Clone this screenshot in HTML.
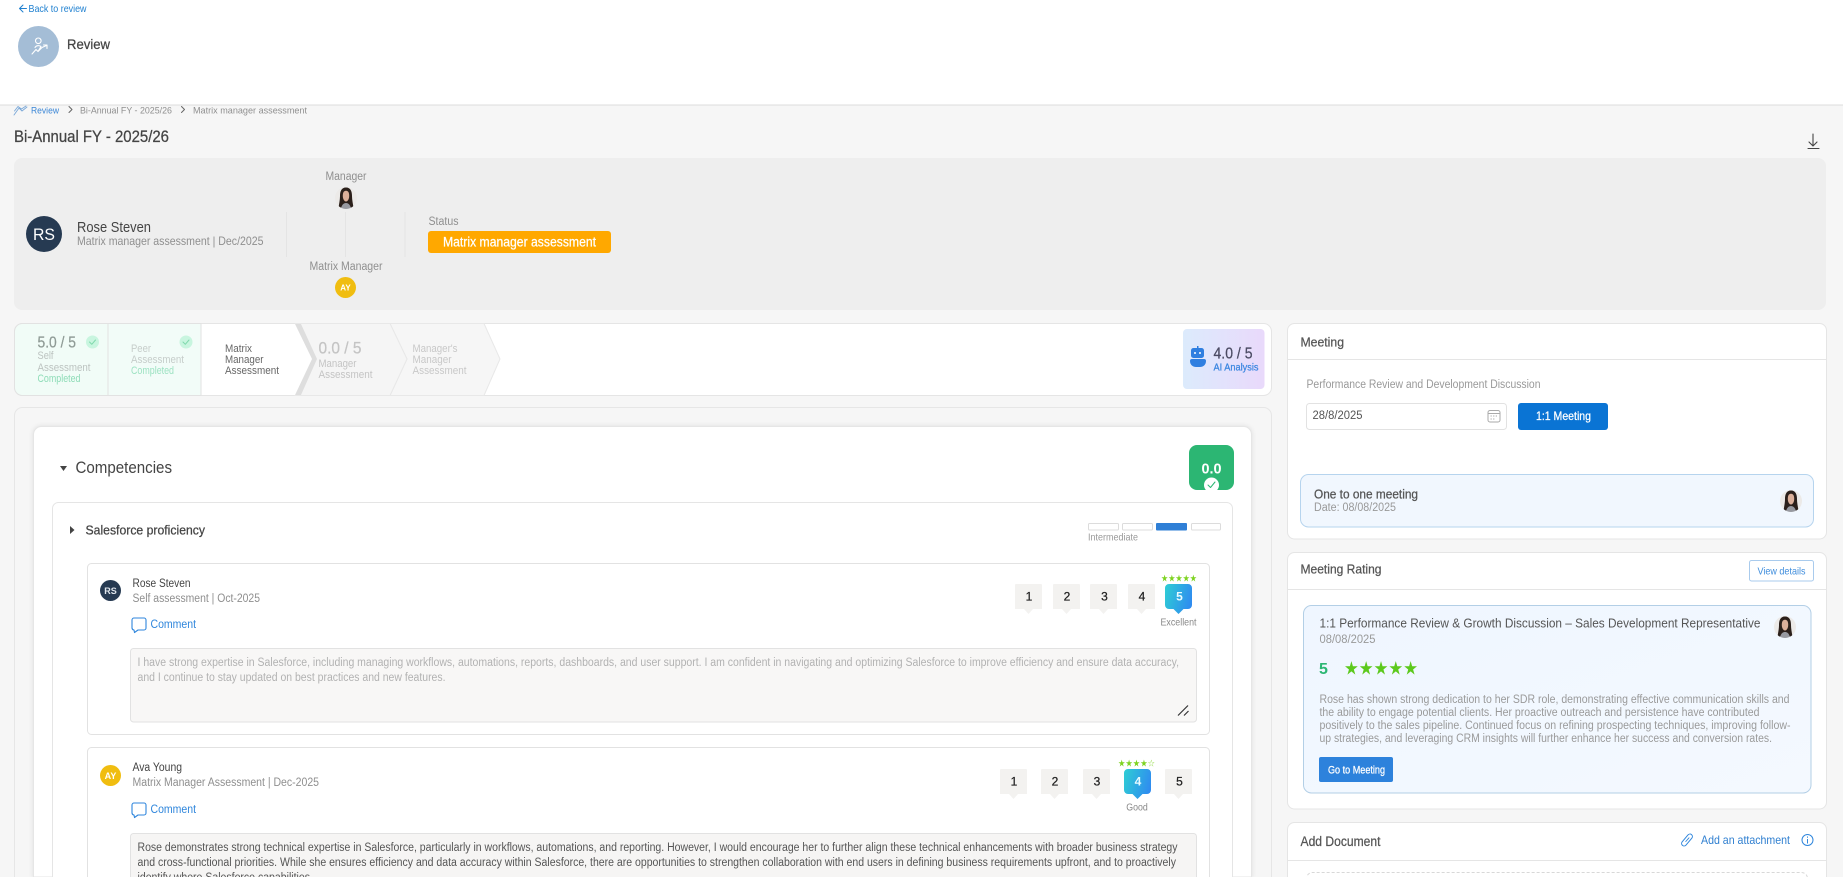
<!DOCTYPE html>
<html lang="en"><head><meta charset="utf-8"><title>Review</title>
<style>
html,body{margin:0;padding:0;width:1843px;height:877px;overflow:hidden;background:#f6f6f6}
svg{display:block}
text{font-family:"Liberation Sans",sans-serif;white-space:pre}
.m{stroke-width:.25px}
.ln{fill:none;stroke-linecap:round;stroke-linejoin:round}
</style></head><body>
<svg width="1843" height="877" viewBox="0 0 1843 877" xmlns="http://www.w3.org/2000/svg">
<defs>
<linearGradient id="ai" x1="0" y1="0" x2="1" y2="0"><stop offset="0" stop-color="#dcebfc"/><stop offset="1" stop-color="#e9d9fb"/></linearGradient>
<linearGradient id="bl" x1="0" y1="0.3" x2="1" y2="0.6"><stop offset="0" stop-color="#2ec9d6"/><stop offset="1" stop-color="#2f8bf0"/></linearGradient>
<linearGradient id="pane" x1="0" y1="0" x2="1" y2="1"><stop offset="0" stop-color="#eff6ff"/><stop offset="1" stop-color="#f4f9ff"/></linearGradient>
<clipPath id="phc"><circle cx="11" cy="11" r="11"/></clipPath>
<clipPath id="bc"><rect x="1189" y="445" width="45" height="45" rx="8"/></clipPath>
<g id="ph"><g clip-path="url(#phc)"><rect width="22" height="22" fill="#eceae8"/>
<path d="M11 .5C6.300 .5 5 4.500 5 9 5 13 4 17 3.500 21L8 20 14 20 18.500 21C18 17 17 13 17 9 17 4.500 15.700 .5 11 .5Z" fill="#2b201b"/>
<path d="M11 3.800C8.300 3.800 7.800 6.500 7.800 9 7.800 12 9.300 14.500 11 14.500 12.700 14.500 14.200 12 14.200 9 14.200 6.500 13.700 3.800 11 3.800Z" fill="#dcb09a"/>
<path d="M6 22C6.500 18 8.500 16 11 16 13.500 16 15.500 18 16 22Z" fill="#9799a0"/></g></g>
<g id="rb"><path d="M1 0H26A1 1 0 0 1 27 1V25H18L13.500 30 9 25H0V1A1 1 0 0 1 1 0Z" fill="#f3f2f0"/></g>
<g id="rbb"><path d="M4 0H23A4 4 0 0 1 27 4V21A4 4 0 0 1 23 25H18.500L13.500 30 8.500 25H4A4 4 0 0 1 0 21V4A4 4 0 0 1 4 0Z" fill="url(#bl)"/></g>
<g id="cm"><path class="ln" d="M134 0H144A2 2 0 0 1 146 2V10A2 2 0 0 1 144 12H138L134.500 14.500 134 12A2.300 2.300 0 0 1 132 10V2A2 2 0 0 1 134 0Z" stroke="#2f86dc" stroke-width="1.100"/></g>
</defs>

<!-- page -->
<rect width="1843" height="877" fill="#f6f6f6"/>
<rect x="0" y="104.500" width="1843" height="1" fill="#dcdcdc"/>
<rect width="1843" height="104.500" fill="#fff"/>

<!-- header -->
<path class="ln" d="M26.500 8.500H19.500M23 5 19.500 8.500 23 12" stroke="#1f80d0" stroke-width="1"/>
<text x="28.500" y="12" font-size="10.500" fill="#1f80d0" textLength="58" lengthAdjust="spacingAndGlyphs">Back to review</text>
<circle cx="38.500" cy="46.500" r="20.500" fill="#a4bdd6"/>
<circle cx="38.300" cy="40.800" r="2.800" fill="none" stroke="#fff" stroke-width="1.100"/>
<path class="ln" d="M32 54 36 49.500 38 51.500 42 47.500 46.500 45.500M43.500 45H47V48.500M35 47.500C36 45.500 39 45 41 46.500L38 51.500" stroke="#fff" stroke-width="1.100"/>
<text x="67" y="49" font-size="14" fill="#444" stroke="#444" class="m" textLength="43" lengthAdjust="spacingAndGlyphs">Review</text>

<!-- breadcrumb -->
<path class="ln" d="M14 115 19 108 22 111 27 107M14.500 111 18 106.500 21.500 109 26 106" stroke="#7aa8d8" stroke-width=".9"/>
<text x="31" y="113.500" font-size="9.500" fill="#3a86d6" textLength="28" lengthAdjust="spacingAndGlyphs">Review</text>
<path class="ln" d="M69 106.500 72 109.500 69 112.500" stroke="#666" stroke-width="1"/>
<text x="80" y="113.500" font-size="9.500" fill="#8f8f8f" textLength="92" lengthAdjust="spacingAndGlyphs">Bi-Annual FY - 2025/26</text>
<path class="ln" d="M181.500 106.500 184.500 109.500 181.500 112.500" stroke="#666" stroke-width="1"/>
<text x="193" y="113.500" font-size="9.500" fill="#8f8f8f" textLength="114" lengthAdjust="spacingAndGlyphs">Matrix manager assessment</text>
<text x="14" y="142" font-size="16.500" fill="#444" stroke="#444" class="m" textLength="155" lengthAdjust="spacingAndGlyphs">Bi-Annual FY - 2025/26</text>
<path class="ln" d="M1813 134V146M1809 142 1813 146 1817 142M1808 148.500H1819" stroke="#444" stroke-width="1.100"/>

<!-- profile band -->
<rect x="14" y="158" width="1812" height="152" rx="8" fill="#eeeeee"/>
<circle cx="44" cy="234" r="18" fill="#263a52"/>
<text x="44" y="240" font-size="17" fill="#fff" text-anchor="middle" textLength="22" lengthAdjust="spacingAndGlyphs">RS</text>
<text x="77" y="232" font-size="15" fill="#444" textLength="74" lengthAdjust="spacingAndGlyphs">Rose Steven</text>
<text x="77" y="245" font-size="12" fill="#8f8f8f" textLength="186.500" lengthAdjust="spacingAndGlyphs">Matrix manager assessment | Dec/2025</text>
<path d="M286.500 212V257M345.500 212V257M405 212V257" stroke="#e4e4e4" stroke-width="1"/>
<text x="346" y="180" font-size="11.500" fill="#8f8f8f" text-anchor="middle" textLength="41" lengthAdjust="spacingAndGlyphs">Manager</text>
<use href="#ph" transform="translate(335 187)"/>
<text x="346" y="270" font-size="11.500" fill="#8f8f8f" text-anchor="middle" textLength="73" lengthAdjust="spacingAndGlyphs">Matrix Manager</text>
<circle cx="345.500" cy="287.500" r="10.500" fill="#f0bd10"/>
<text x="345.500" y="290.500" font-size="8" font-weight="bold" fill="#fff" text-anchor="middle">AY</text>
<text x="428.500" y="225" font-size="11.500" fill="#8f8f8f" textLength="30" lengthAdjust="spacingAndGlyphs">Status</text>
<rect x="428" y="231" width="183" height="22" rx="3" fill="#ffa800"/>
<text x="443" y="246.500" font-size="13.500" fill="#fff" stroke="#fff" class="m" textLength="153" lengthAdjust="spacingAndGlyphs">Matrix manager assessment</text>

<!-- stepper -->
<rect x="14.500" y="323.500" width="1257" height="72" rx="8" fill="#fff" stroke="#e5e5e5"/>
<path d="M390 323.500H484L500 359 484 395.500H390L407 359Z" fill="#f6f6f6" stroke="#e8e8e8"/>
<path d="M295 323.500H390L407 359 390 395.500H295L312 359Z" fill="#f5f5f5" stroke="#e8e8e8"/>
<path d="M22 323.500H108V395.500H22A8 8 0 0 1 14.500 387.500V331.500A8 8 0 0 1 22 323.500Z" fill="#f1fcf7" stroke="#e2e2e2"/>
<rect x="108" y="323.500" width="93" height="72" fill="#f2fcf8" stroke="#e2e2e2"/>
<path d="M295 324H301L317 359 301 395H295L312 359Z" fill="#dedede"/>
<path d="M201.500 324H295L312 359 295 395H201.500Z" fill="#fff"/>
<text x="37.500" y="347.500" font-size="15.500" fill="#8f9b96" stroke="#8f9b96" class="m" textLength="38.500" lengthAdjust="spacingAndGlyphs">5.0 / 5</text>
<circle cx="92.500" cy="342" r="6.500" fill="#c8f5df"/><path class="ln" d="M89.500 342 91.800 344.300 95.500 340" stroke="#7fd9ac"/>
<text x="37.500" y="359" font-size="11" fill="#bcc3c0" textLength="16" lengthAdjust="spacingAndGlyphs">Self</text>
<text x="37.500" y="371" font-size="11" fill="#bcc3c0" textLength="53" lengthAdjust="spacingAndGlyphs">Assessment</text>
<text x="37.500" y="382" font-size="11" fill="#8edcb7" textLength="43" lengthAdjust="spacingAndGlyphs">Completed</text>
<circle cx="186" cy="342" r="6.500" fill="#c8f5df"/><path class="ln" d="M183 342 185.300 344.300 189 340" stroke="#7fd9ac"/>
<text x="131" y="352" font-size="11" fill="#c6cdca" textLength="20" lengthAdjust="spacingAndGlyphs">Peer</text>
<text x="131" y="363" font-size="11" fill="#c6cdca" textLength="53" lengthAdjust="spacingAndGlyphs">Assessment</text>
<text x="131" y="374" font-size="11" fill="#9de2c2" textLength="43" lengthAdjust="spacingAndGlyphs">Completed</text>
<text x="225" y="352" font-size="11" fill="#666" textLength="27" lengthAdjust="spacingAndGlyphs">Matrix</text>
<text x="225" y="363" font-size="11" fill="#666" textLength="38.500" lengthAdjust="spacingAndGlyphs">Manager</text>
<text x="225" y="374" font-size="11" fill="#666" textLength="54" lengthAdjust="spacingAndGlyphs">Assessment</text>
<text x="318.500" y="353.500" font-size="16.500" fill="#c4c4c4" stroke="#c4c4c4" class="m" textLength="43" lengthAdjust="spacingAndGlyphs">0.0 / 5</text>
<text x="318.500" y="367" font-size="11" fill="#c4c4c4" textLength="38" lengthAdjust="spacingAndGlyphs">Manager</text>
<text x="318.500" y="378" font-size="11" fill="#c4c4c4" textLength="54" lengthAdjust="spacingAndGlyphs">Assessment</text>
<text x="412.500" y="352" font-size="11" fill="#c8c8c8" textLength="45" lengthAdjust="spacingAndGlyphs">Manager's</text>
<text x="412.500" y="363" font-size="11" fill="#c8c8c8" textLength="39" lengthAdjust="spacingAndGlyphs">Manager</text>
<text x="412.500" y="374" font-size="11" fill="#c8c8c8" textLength="54" lengthAdjust="spacingAndGlyphs">Assessment</text>
<!-- AI -->
<rect x="1183" y="329" width="81.500" height="60" rx="4" fill="url(#ai)"/>
<rect x="1191" y="348" width="13" height="10" rx="2.500" fill="#2f7fe0"/>
<rect x="1197" y="346" width="1.500" height="3" fill="#2f7fe0"/>
<circle cx="1195" cy="353" r="1" fill="#fff"/><circle cx="1200" cy="353" r="1" fill="#fff"/>
<path d="M1192 359H1204A2 2 0 0 1 1206 361C1206 365 1203 367 1200 367H1196C1193 367 1190 365 1190 361A2 2 0 0 1 1192 359Z" fill="#2f7fe0"/>
<text x="1213.500" y="358.500" font-size="15.500" fill="#4b4b63" stroke="#4b4b63" class="m" textLength="39" lengthAdjust="spacingAndGlyphs">4.0 / 5</text>
<text x="1213.500" y="370.500" font-size="10.500" fill="#3a86e0" stroke="#3a86e0" class="m" textLength="45" lengthAdjust="spacingAndGlyphs">AI Analysis</text>

<!-- left panel -->
<path d="M14.500 877V415.500A8 8 0 0 1 22.500 407.500H1263.500A8 8 0 0 1 1271.500 415.500V877" fill="#f6f6f6" stroke="#e6e6e6"/>
<path d="M33.500 877V434.500A8 8 0 0 1 41.500 426.500H1243.500A8 8 0 0 1 1251.500 434.500V877Z" fill="#fff" stroke="#e6e6e6" style="filter:drop-shadow(0 0 2px #ddd)"/>
<path d="M60 466H67L63.500 471Z" fill="#444"/>
<text x="75.500" y="473" font-size="16.500" fill="#444" textLength="96.500" lengthAdjust="spacingAndGlyphs">Competencies</text>
<rect x="1189" y="445" width="45" height="45" rx="8" fill="#2cb673"/>
<text x="1201.500" y="473.500" font-size="14.500" font-weight="bold" fill="#fff" textLength="20" lengthAdjust="spacingAndGlyphs">0.0</text>
<g clip-path="url(#bc)"><circle cx="1211.500" cy="485" r="7.500" fill="#fff"/><path class="ln" d="M1208 485 1210.500 487.500 1215 482" stroke="#2cb673"/></g>

<!-- competency card -->
<path d="M52.500 877V508.500A6 6 0 0 1 58.500 502.500H1226.500A6 6 0 0 1 1232.500 508.500V877" fill="#fff" stroke="#e5e5e5"/>
<path d="M70 526 74.500 530 70 534Z" fill="#444"/>
<text x="85.500" y="534.500" font-size="13" fill="#444" stroke="#444" class="m" textLength="119.500" lengthAdjust="spacingAndGlyphs">Salesforce proficiency</text>
<rect x="1088.500" y="523.500" width="30" height="6.500" rx="1" fill="#fff" stroke="#dcdcdc"/>
<rect x="1122.500" y="523.500" width="30" height="6.500" rx="1" fill="#fff" stroke="#dcdcdc"/>
<rect x="1156" y="523" width="31" height="7.500" rx="1" fill="#2f7fd6"/>
<rect x="1191.500" y="523.500" width="29" height="6.500" rx="1" fill="#fff" stroke="#dcdcdc"/>
<text x="1088" y="540.500" font-size="10.500" fill="#999" textLength="50" lengthAdjust="spacingAndGlyphs">Intermediate</text>

<!-- rose review -->
<rect x="87.500" y="563.500" width="1122" height="171" rx="4" fill="#fff" stroke="#e2e2e2"/>
<circle cx="110.500" cy="590.500" r="10.500" fill="#263a52"/>
<text x="110.500" y="594" font-size="9" font-weight="bold" fill="#dfe5ec" text-anchor="middle">RS</text>
<text x="132.500" y="587" font-size="11.500" fill="#444" textLength="58" lengthAdjust="spacingAndGlyphs">Rose Steven</text>
<text x="132.500" y="602" font-size="11.500" fill="#8f8f8f" textLength="127.500" lengthAdjust="spacingAndGlyphs">Self assessment | Oct-2025</text>
<use href="#cm" transform="translate(0 618)"/>
<text x="150.500" y="628" font-size="11.500" fill="#2f86dc" textLength="45.500" lengthAdjust="spacingAndGlyphs">Comment</text>
<rect x="130.500" y="648.500" width="1066" height="73.500" rx="3" fill="#f8f7f6" stroke="#e2e2e2"/>
<text x="137.500" y="666" font-size="11.500" fill="#b2b2b2" textLength="1041.500" lengthAdjust="spacingAndGlyphs">I have strong expertise in Salesforce, including managing workflows, automations, reports, dashboards, and user support. I am confident in navigating and optimizing Salesforce to improve efficiency and ensure data accuracy,</text>
<text x="137.500" y="681" font-size="11.500" fill="#b2b2b2" textLength="308" lengthAdjust="spacingAndGlyphs">and I continue to stay updated on best practices and new features.</text>
<path d="M1178 715.500 1188 705.500M1184 715.500 1188.500 711" stroke="#333" stroke-width="1.200" fill="none"/>
<use href="#rb" x="1015" y="584"/><use href="#rb" x="1053" y="584"/><use href="#rb" x="1090" y="584"/><use href="#rb" x="1128" y="584"/><use href="#rbb" x="1165" y="584"/>
<g font-size="12" text-anchor="middle" fill="#222" stroke="#222" class="m"><text x="1029" y="600.500">1</text><text x="1067" y="600.500">2</text><text x="1104.500" y="600.500">3</text><text x="1142" y="600.500">4</text></g>
<text x="1179.500" y="600.500" font-size="12" font-weight="bold" text-anchor="middle" fill="#e8fbff">5</text>
<text x="1161" y="581.500" font-size="9.500" fill="#7ed321" textLength="36" lengthAdjust="spacingAndGlyphs" style="font-family:'DejaVu Sans',sans-serif">★★★★★</text>
<text x="1178.500" y="625.500" font-size="10.500" fill="#888" text-anchor="middle" textLength="36" lengthAdjust="spacingAndGlyphs">Excellent</text>

<!-- ava review -->
<path d="M87.500 877V751.500A4 4 0 0 1 91.500 747.500H1205.500A4 4 0 0 1 1209.500 751.500V877" fill="#fff" stroke="#e2e2e2"/>
<circle cx="110.500" cy="775.500" r="10.500" fill="#f0bd10"/>
<text x="110.500" y="779" font-size="9" font-weight="bold" fill="#fff" text-anchor="middle">AY</text>
<text x="132.500" y="771" font-size="11.500" fill="#444" textLength="49.500" lengthAdjust="spacingAndGlyphs">Ava Young</text>
<text x="132.500" y="786" font-size="11.500" fill="#8f8f8f" textLength="186.500" lengthAdjust="spacingAndGlyphs">Matrix Manager Assessment | Dec-2025</text>
<use href="#cm" transform="translate(0 803)"/>
<text x="150.500" y="813" font-size="11.500" fill="#2f86dc" textLength="45.500" lengthAdjust="spacingAndGlyphs">Comment</text>
<path d="M130.500 877V836.500A3 3 0 0 1 133.500 833.500H1193.500A3 3 0 0 1 1196.500 836.500V877" fill="#f6f5f4" stroke="#e2e2e2"/>
<text x="137.500" y="851" font-size="11.500" fill="#555" textLength="1040" lengthAdjust="spacingAndGlyphs">Rose demonstrates strong technical expertise in Salesforce, particularly in workflows, automations, and reporting. However, I would encourage her to further align these technical enhancements with broader business strategy</text>
<text x="137.500" y="866" font-size="11.500" fill="#555" textLength="1038.500" lengthAdjust="spacingAndGlyphs">and cross-functional priorities. While she ensures efficiency and data accuracy within Salesforce, there are opportunities to strengthen collaboration with end users in defining business requirements upfront, and to proactively</text>
<text x="137.500" y="881" font-size="11.500" fill="#555" textLength="172.500" lengthAdjust="spacingAndGlyphs">identify where Salesforce capabilities</text>
<use href="#rb" x="1000" y="769"/><use href="#rb" x="1041" y="769"/><use href="#rb" x="1083" y="769"/><use href="#rbb" x="1124" y="769"/><use href="#rb" x="1165" y="769"/>
<g font-size="12" text-anchor="middle" fill="#222" stroke="#222" class="m"><text x="1014" y="785.500">1</text><text x="1055" y="785.500">2</text><text x="1097" y="785.500">3</text><text x="1179.500" y="785.500">5</text></g>
<text x="1138" y="785.500" font-size="12" font-weight="bold" text-anchor="middle" fill="#e8fbff">4</text>
<text x="1118" y="766.500" font-size="9.500" fill="#7ed321" textLength="37" lengthAdjust="spacingAndGlyphs" style="font-family:'DejaVu Sans',sans-serif">★★★★☆</text>
<text x="1137" y="810.500" font-size="10.500" fill="#888" text-anchor="middle" textLength="21.500" lengthAdjust="spacingAndGlyphs">Good</text>

<!-- Meeting card -->
<rect x="1287.500" y="323.500" width="539" height="215.500" rx="7" fill="#fff" stroke="#e5e5e5"/>
<rect x="1288" y="359" width="538" height="1" fill="#e5e5e5"/>
<text x="1300.500" y="346.500" font-size="13" fill="#555" stroke="#555" class="m" textLength="43.500" lengthAdjust="spacingAndGlyphs">Meeting</text>
<text x="1306.500" y="388" font-size="11.500" fill="#999" textLength="234" lengthAdjust="spacingAndGlyphs">Performance Review and Development Discussion</text>
<rect x="1306.500" y="403.500" width="200" height="26" rx="3" fill="#fff" stroke="#e2e2e2"/>
<text x="1312.500" y="419" font-size="11.500" fill="#555" textLength="50" lengthAdjust="spacingAndGlyphs">28/8/2025</text>
<rect x="1488" y="410.500" width="12" height="11.500" rx="2" fill="none" stroke="#aaa"/>
<path d="M1488 413.500H1500" stroke="#aaa"/><path d="M1490.500 416H1498M1490.500 419H1495.500" stroke="#aaa" stroke-dasharray="1.300 1.300"/>
<rect x="1518" y="403" width="90" height="27" rx="3" fill="#0a74d4"/>
<text x="1536" y="420" font-size="12" fill="#fff" stroke="#fff" class="m" textLength="55" lengthAdjust="spacingAndGlyphs">1:1 Meeting</text>
<rect x="1300.500" y="474.500" width="513" height="52.500" rx="8" fill="#f1f7fe" stroke="#b6d4ee"/>
<text x="1314" y="498.500" font-size="13" fill="#555" stroke="#555" class="m" textLength="104" lengthAdjust="spacingAndGlyphs">One to one meeting</text>
<text x="1314" y="511" font-size="11.500" fill="#999" textLength="82" lengthAdjust="spacingAndGlyphs">Date: 08/08/2025</text>
<use href="#ph" transform="translate(1780 490)"/>

<!-- Meeting rating -->
<rect x="1287.500" y="552.500" width="539" height="256.500" rx="7" fill="#fff" stroke="#e5e5e5"/>
<rect x="1288" y="589" width="538" height="1" fill="#e5e5e5"/>
<text x="1300.500" y="573.500" font-size="13" fill="#555" stroke="#555" class="m" textLength="81" lengthAdjust="spacingAndGlyphs">Meeting Rating</text>
<rect x="1749.500" y="560.500" width="64" height="20.500" rx="2" fill="#fff" stroke="#a9cbed"/>
<text x="1757.500" y="574.500" font-size="10.500" fill="#3f8ddc" textLength="48" lengthAdjust="spacingAndGlyphs">View details</text>
<rect x="1303.500" y="605.500" width="507.500" height="187.500" rx="8" fill="url(#pane)" stroke="#b3cfe6"/>
<text x="1319.500" y="627.500" font-size="13" fill="#555" textLength="441" lengthAdjust="spacingAndGlyphs">1:1 Performance Review &amp; Growth Discussion – Sales Development Representative</text>
<text x="1319.500" y="643" font-size="11.500" fill="#999" textLength="56" lengthAdjust="spacingAndGlyphs">08/08/2025</text>
<use href="#ph" transform="translate(1774 616)"/>
<text x="1319" y="674" font-size="16" font-weight="bold" fill="#2cb673">5</text>
<text x="1344" y="674.500" font-size="18.500" fill="#5cc91c" textLength="74" lengthAdjust="spacingAndGlyphs" style="font-family:'DejaVu Sans',sans-serif">★★★★★</text>
<g font-size="11.500" fill="#9a9a9a">
<text x="1319.500" y="703" textLength="470" lengthAdjust="spacingAndGlyphs">Rose has shown strong dedication to her SDR role, demonstrating effective communication skills and</text>
<text x="1319.500" y="716" textLength="440" lengthAdjust="spacingAndGlyphs">the ability to engage potential clients. Her proactive outreach and persistence have contributed</text>
<text x="1319.500" y="729" textLength="471" lengthAdjust="spacingAndGlyphs">positively to the sales pipeline. Continued focus on refining prospecting techniques, improving follow-</text>
<text x="1319.500" y="742" textLength="452.500" lengthAdjust="spacingAndGlyphs">up strategies, and leveraging CRM insights will further enhance her success and conversion rates.</text>
</g>
<rect x="1319" y="757" width="74" height="25" rx="2" fill="#2d82dc"/>
<text x="1328" y="773.500" font-size="11" fill="#fff" stroke="#fff" class="m" textLength="57" lengthAdjust="spacingAndGlyphs">Go to Meeting</text>

<!-- Add document -->
<path d="M1287.500 877V829.500A7 7 0 0 1 1294.500 822.500H1819.500A7 7 0 0 1 1826.500 829.500V877" fill="#fff" stroke="#e5e5e5"/>
<rect x="1288" y="860" width="538" height="1" fill="#e5e5e5"/>
<text x="1300.500" y="846" font-size="13.500" fill="#555" stroke="#555" class="m" textLength="80" lengthAdjust="spacingAndGlyphs">Add Document</text>
<rect x="1684.500" y="833" width="5" height="14" rx="2.500" transform="rotate(40 1687 840)" fill="none" stroke="#2f86dc" stroke-width="1"/>
<path class="ln" d="M1685.800 841.500 1689 837.800" stroke="#2f86dc" stroke-width=".9"/>
<text x="1701" y="844" font-size="12" fill="#2f7fd0" textLength="89" lengthAdjust="spacingAndGlyphs">Add an attachment</text>
<circle cx="1807.500" cy="840" r="5.500" fill="none" stroke="#2f86dc"/><path d="M1807.500 839V843.500M1807.500 836.500V837.700" stroke="#2f86dc"/>
<path d="M1306.500 877V878.500A6 6 0 0 1 1312.500 872.500H1801.500A6 6 0 0 1 1807.500 878.500" fill="none" stroke="#d8d8d8" stroke-dasharray="3 2" transform="translate(0 0)"/>
</svg>
</body></html>
